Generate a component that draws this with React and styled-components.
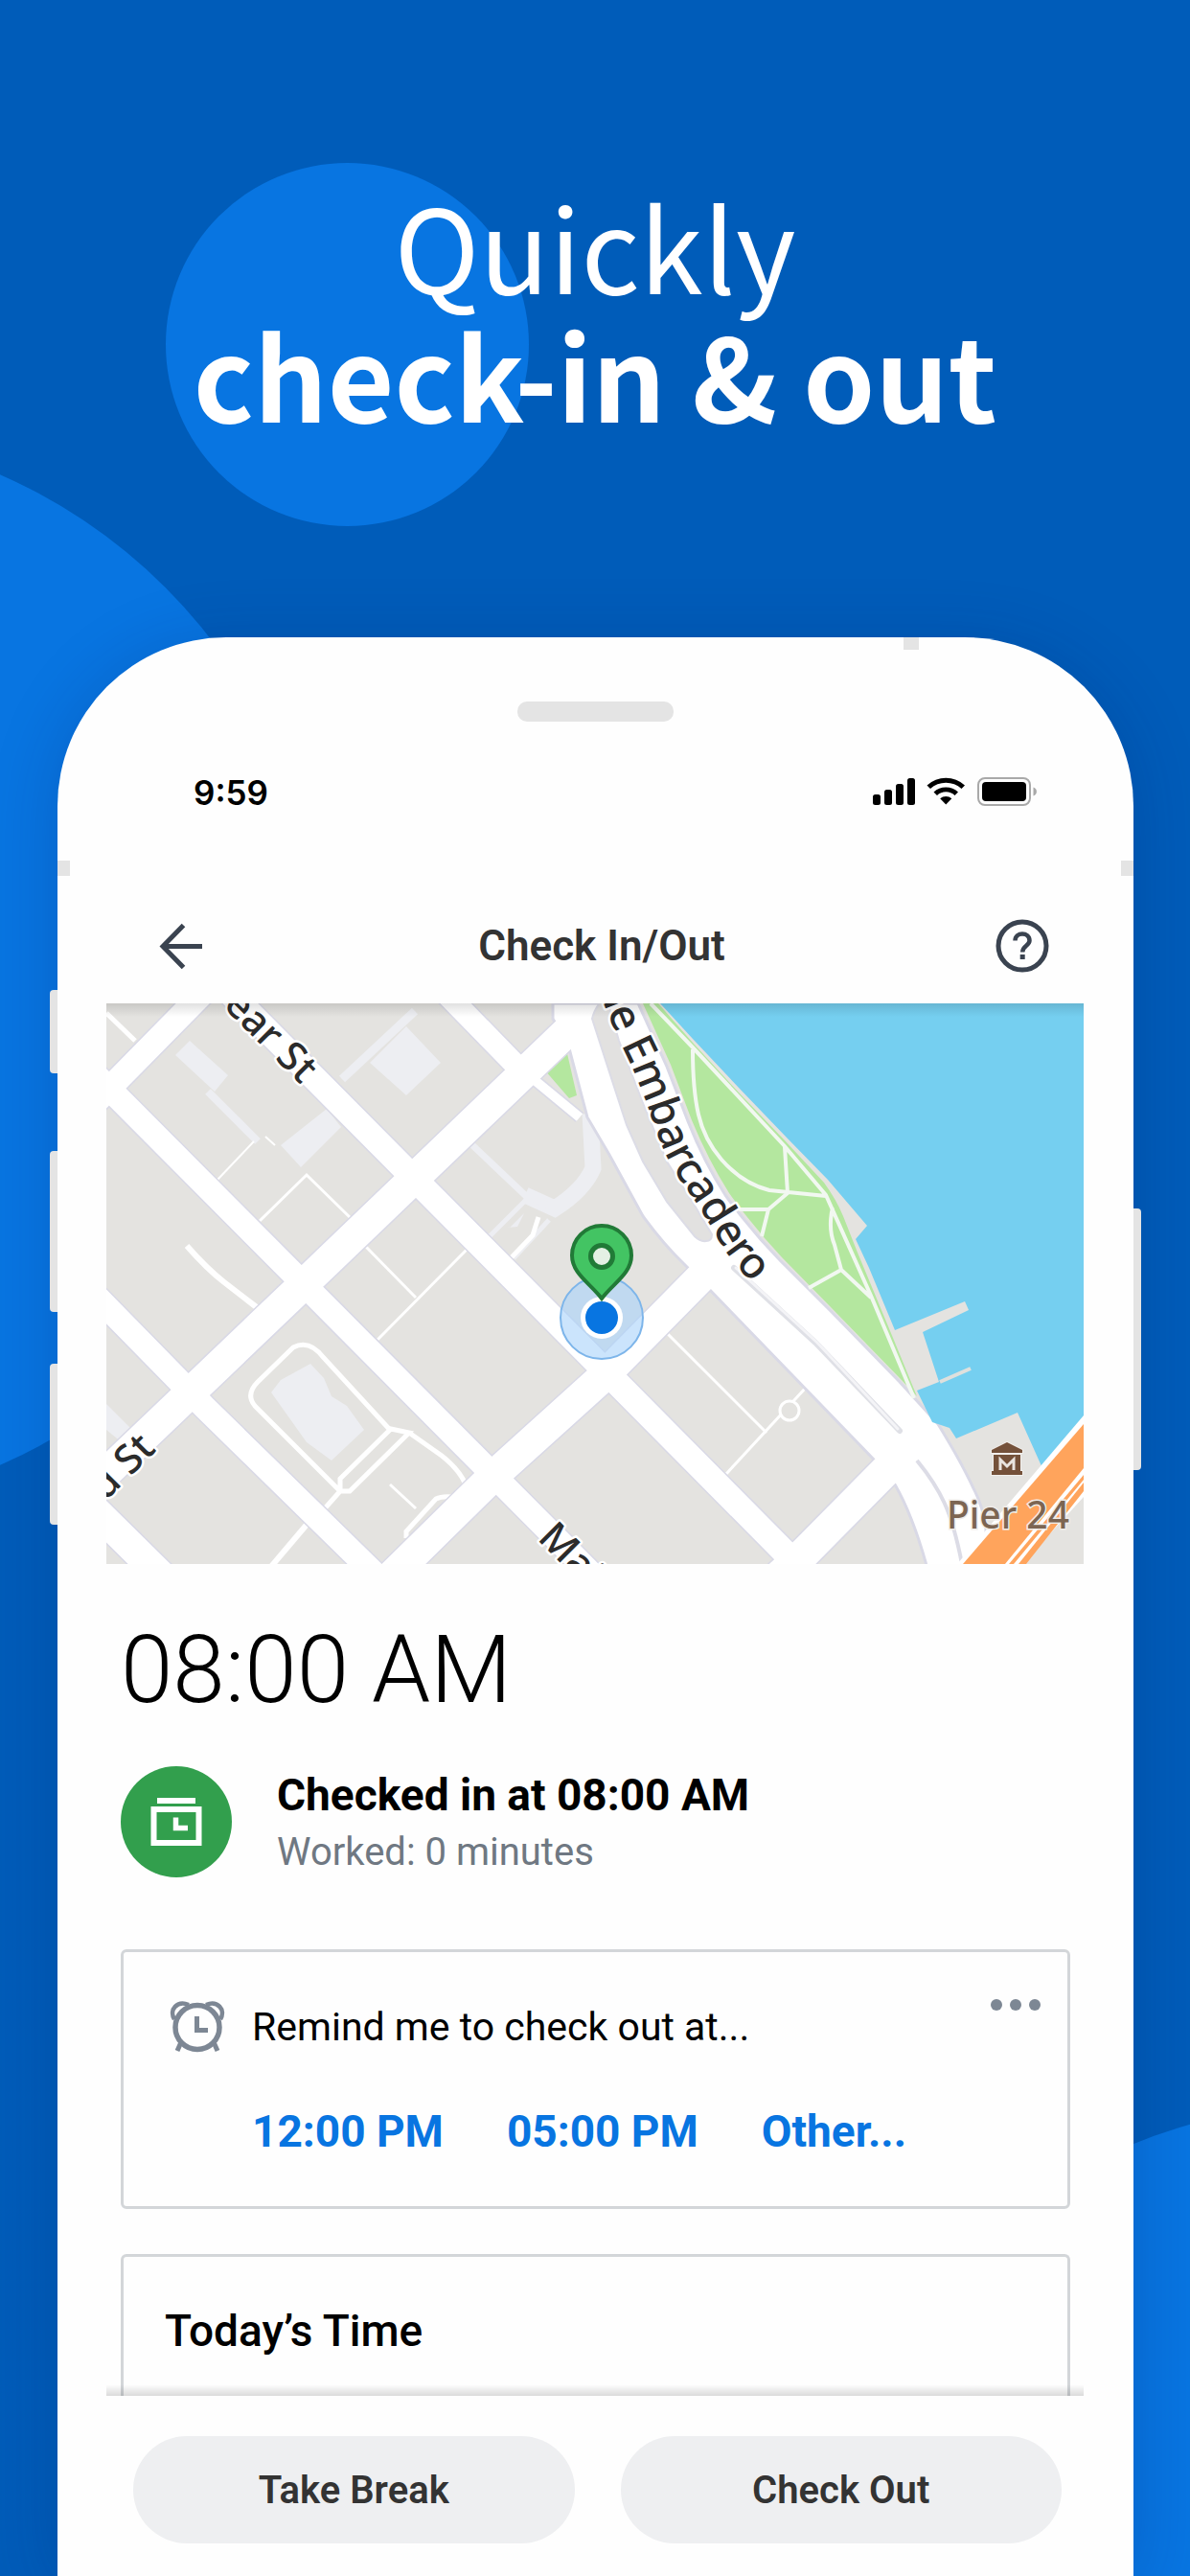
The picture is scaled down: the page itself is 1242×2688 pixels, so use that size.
import React from "react";
import styled, { createGlobalStyle } from "styled-components";

const color = {
  base: "#005cb9",
  bright: "#0875e1",
  frame: "#fefefe",
  hardware: "#e4e4e4",
  ink: "#000000",
  heading: "#333333",
  muted: "#6f7882",
  border: "#d3d6d9",
  success: "#329f4d",
  pill: "#eeeff1",
};

const Global = createGlobalStyle`
  *, *::before, *::after { box-sizing: border-box; }
  body { margin: 0; background: ${color.base}; font-family: Roboto, "Liberation Sans", sans-serif; }
  h1, h2, p { margin: 0; }
  button { border: 0; padding: 0; background: none; font-family: inherit; cursor: pointer; }
  svg { display: block; }
`;

const Poster = styled.main`
  position: relative;
  overflow: hidden;
  background: ${color.base};
`;

const Disc = styled.span`
  position: absolute;
  left: ${(p) => p.$x}px;
  top: ${(p) => p.$y}px;
  width: ${(p) => p.$size}px;
  height: ${(p) => p.$size}px;
  border-radius: 50%;
  background: ${color.bright};
`;

const Hero = styled.h1`
  position: relative;
  height: 665px;
  padding-top: 188px;
  text-align: center;
  color: #fff;
  font-family: "Noto Sans CJK JP", "Noto Sans", sans-serif;
  font-size: 120px;
  font-weight: 400;
  line-height: 134px;
`;

const HeroStrong = styled.strong`
  display: block;
  font-weight: 700;
`;

const Phone = styled.section`
  position: relative;
  margin: 0 59px 0 60px;
  padding: 67px 52px 0 51px;
  border-radius: 176px 176px 0 0;
  background: ${color.frame};
  box-shadow: 0 10px 70px rgba(0, 30, 100, 0.22);
`;

const SideKey = styled.span`
  position: absolute;
  top: ${(p) => p.$top}px;
  ${(p) => p.$side}: -8px;
  width: 8px;
  height: ${(p) => p.$height}px;
  border-radius: ${(p) => (p.$side === "left" ? "4px 0 0 4px" : "0 4px 4px 0")};
  background: ${color.hardware};
`;

const AntennaTop = styled.span`
  position: absolute;
  top: 0;
  right: 224px;
  width: 16px;
  height: 13px;
  background: ${color.hardware};
`;

const AntennaSide = styled.span`
  position: absolute;
  top: 233px;
  ${(p) => p.$side}: 0;
  width: 13px;
  height: 16px;
  background: ${color.hardware};
`;

const Speaker = styled.div`
  width: 163px;
  height: 21px;
  margin: 0 auto;
  border-radius: 10px;
  background: ${color.hardware};
`;

const StatusBar = styled.div`
  display: flex;
  align-items: center;
  justify-content: space-between;
  height: 44px;
  margin-top: 52px;
  padding: 0 48px 0 91px;
`;

const Clock = styled.time`
  font-family: Inter, sans-serif;
  font-size: 35px;
  font-weight: 600;
  line-height: 44px;
  color: ${color.ink};
`;

const TitleBar = styled.header`
  display: grid;
  grid-template-columns: 60px 1fr 60px;
  align-items: center;
  height: 120px;
  margin-top: 78px;
  padding: 0 34px 0 48px;
`;

const IconButton = styled.button`
  display: flex;
  align-items: center;
  justify-content: center;
  width: 60px;
  height: 60px;
`;

const Title = styled.h2`
  text-align: center;
  font-size: 44px;
  font-weight: 600;
  line-height: 58px;
  color: ${color.heading};
`;

const MapView = styled.svg`
  width: 100%;
  height: auto;
  background: #e4e3e0;
`;

const Content = styled.div`
  padding: 51px 14px 0 15px;
`;

const BigTime = styled.p`
  font-size: 98px;
  font-weight: 300;
  line-height: 120px;
  color: ${color.ink};
`;

const Status = styled.div`
  display: flex;
  gap: 47px;
  margin: 40px 0 71px;
`;

const Badge = styled.span`
  display: flex;
  flex: none;
  align-items: center;
  justify-content: center;
  width: 116px;
  height: 116px;
  border-radius: 50%;
  background: ${color.success};
`;

const StatusTitle = styled.h2`
  font-size: 46px;
  font-weight: 700;
  line-height: 60px;
  color: ${color.ink};
`;

const StatusNote = styled.p`
  font-size: 40px;
  line-height: 60px;
  color: ${color.muted};
`;

const Card = styled.section`
  padding: ${(p) => p.$pad};
  border: 3px solid ${color.border};
  border-bottom-width: ${(p) => (p.$open ? 0 : 3)}px;
  border-radius: ${(p) => (p.$open ? "6px 6px 0 0" : "6px")};
`;

const CardHead = styled.div`
  display: grid;
  grid-template-columns: 58px 1fr auto;
  column-gap: 28px;
  align-items: center;
  height: 58px;
`;

const Prompt = styled.p`
  font-size: 41px;
  line-height: 58px;
  color: ${color.ink};
`;

const MoreButton = styled.button`
  align-self: start;
  height: 12px;
`;

const Times = styled.div`
  display: flex;
  gap: 66px;
  margin-top: 50px;
  padding-left: 86px;
`;

const TimeOption = styled.button`
  font-size: 46px;
  font-weight: 700;
  line-height: 60px;
  color: ${color.bright};
`;

const SecondCard = styled.div`
  margin-top: 47px;
`;

const CardTitle = styled.h2`
  font-size: 46px;
  font-weight: 500;
  line-height: 60px;
  color: ${color.ink};
`;

const Actions = styled.footer`
  display: flex;
  gap: 48px;
  padding: 42px 23px 34px 28px;
  position: relative;
  background: ${color.frame};

  &::before {
    content: "";
    position: absolute;
    left: 0;
    right: 0;
    bottom: 100%;
    height: 12px;
    background: linear-gradient(rgba(0, 0, 0, 0), rgba(0, 0, 0, 0.14));
  }
`;

const Pill = styled.button`
  flex: 1;
  height: 112px;
  border-radius: 56px;
  background: ${color.pill};
  font-size: 40px;
  font-weight: 600;
  color: ${color.heading};
`;

function StatusIcons() {
  return (
    <svg width="173" height="32" viewBox="0 0 173 32" aria-hidden="true">
      <rect x="1" y="18" width="8" height="11" rx="2.5" />
      <rect x="13" y="13" width="8" height="16" rx="2.5" />
      <rect x="25" y="7" width="8" height="22" rx="2.5" />
      <rect x="37" y="1" width="8" height="28" rx="2.5" />
      <path d="M57.5 8.5 61 12a24 24 0 0 1 32.500 0L97 8.500a29 29 0 0 0-39.500 0Z" />
      <path d="M64.500 15.500 68 19a13.500 13.500 0 0 1 18.500 0L90 15.500a18.500 18.500 0 0 0-25.500 0Z" />
      <path d="M71.200 22.300 77.250 28.500 83.300 22.300a9 9 0 0 0-12.100 0Z" />
      <rect x="111" y="1" width="54" height="28" rx="7" fill="none" stroke="#a9a9a9" strokeWidth="2" />
      <rect x="115" y="5" width="46" height="20" rx="4" />
      <path d="M168.500 10.500c4.500 1.500 4.500 7.500 0 9Z" fill="#a9a9a9" />
    </svg>
  );
}

function BackIcon() {
  return (
    <svg width="46" height="48" viewBox="0 0 46 48" fill="none" stroke="#3a4350" strokeWidth="5" aria-hidden="true">
      <path d="M45 24.500H5M25.500 2.500 4 24.500l21.500 22" />
    </svg>
  );
}

function HelpIcon() {
  return (
    <svg width="56" height="56" viewBox="0 0 56 56" fill="none" stroke="#3a4350" aria-hidden="true">
      <circle cx="28" cy="28" r="25" strokeWidth="5" />
      <path d="M20.500 22.500c0-9.500 15-9.500 15 0 0 5.500-7.300 5-7.300 12" strokeWidth="4.500" />
      <rect x="25.700" y="37" width="5" height="5" fill="#3a4350" stroke="none" />
    </svg>
  );
}

function BadgeIcon() {
  return (
    <svg width="54" height="50" viewBox="0 0 54 50" aria-hidden="true">
      <path d="M7 0h40v6H7Z" fill="#fff" />
      <rect x="3.500" y="12" width="47" height="35" fill="none" stroke="#fff" strokeWidth="6" />
      <path d="M26.500 20.500v11H39" fill="none" stroke="#fff" strokeWidth="5.500" />
    </svg>
  );
}

function AlarmIcon() {
  return (
    <svg width="58" height="54" viewBox="0 0 58 54" fill="none" stroke="#7d8794" aria-hidden="true">
      <circle cx="29" cy="27.500" r="23" strokeWidth="5.500" />
      <path d="M5 19C-1 9 8-1 20 4M53 19C59 9 50-1 38 4" strokeWidth="4.500" />
      <path d="m12 43-4 9M46 43l4 9" strokeWidth="5" />
      <path d="M28.500 16v14.500H40" strokeWidth="5" />
    </svg>
  );
}

function DotsIcon() {
  return (
    <svg width="54" height="12" viewBox="0 0 54 12" fill="#7d8794" aria-hidden="true">
      <circle cx="7" cy="6" r="6" />
      <circle cx="27" cy="6" r="6" />
      <circle cx="47" cy="6" r="6" />
    </svg>
  );
}

const streets = [
  { d: "M-20 112 110-20", w: 25 },
  { d: "M-20 509 206 293 497 14", w: 32 },
  { d: "M290 605 405 492 517 391 640 266", w: 32 },
  { d: "M700 600 729 573 812 489 850 452", w: 33 },
  { d: "M120-20 530 393 740 605", w: 26 },
  { d: "M-20 66 206 293 520 609", w: 25 },
  { d: "M-20 296 80 398 102 421 290 605", w: 25 },
  { d: "M-20 521 65 605", w: 31 },
  { d: "M345-20 425 62", w: 23 },
  { d: "M425 62 494 119", w: 10 },
];

const lanes = [
  { d: "M0 10 30 39", w: 5 },
  { d: "M154 144 116 184", w: 2 },
  { d: "M166 139 176 148", w: 2 },
  { d: "M160 227 209 179 256 225", w: 3 },
  { d: "M270 253 323 307", w: 3 },
  { d: "M376 257 283 351", w: 3 },
  { d: "M84 253Q105 277 123 291L158 318", w: 6 },
  { d: "M296 445 227 370Q212 350 195 359L158 395Q145 408 155 420L244 509H254L316 448 297 444 244 496V509L228 527", w: 5 },
  { d: "M316 448 350 472Q368 486 375 502", w: 5 },
  { d: "M209 544 170 590", w: 6 },
  { d: "M296 502 323 527", w: 3 },
  { d: "M313 558V551L344 517Q350 514 361 515", w: 5 },
  { d: "M451 223 445 242 421 267", w: 5 },
  { d: "M582 341 689 448", w: 3 },
  { d: "M730 401 646 492", w: 3 },
];

const trails =
  "M568 0 612 46 707 148 751 200 798 305 843 412M612 48Q612 90 618 116T642 163Q664 188 692 195L751 201M708 150 711 198 691 215 684 243M691 215H660M758 213Q753 235 760 252L767 278 798 307M767 278 733 297";

function CityMap() {
  return (
    <MapView viewBox="0 0 1020 585" role="img" aria-label="Map around Pier 24">
      <defs>
        <linearGradient id="mapShade" x1="0" y1="0" x2="0" y2="1">
          <stop offset="0" stopColor="#000" stopOpacity="0.12" />
          <stop offset="1" stopColor="#000" stopOpacity="0" />
        </linearGradient>
        <path id="waterfront" d="M512-18Q528 24 543 55T571 125 601 187 641 250 740 352" />
      </defs>
      <rect width="1020" height="585" fill="#e4e3e0" />

      <g fill="#edeef2">
        <path d="M87 39 127 75 113 92 72 54Z" />
        <path d="M230 110 245 129 203 171 182 148Z" />
        <path d="M313 24 349 62 313 96 275 62Z" />
        <path d="M213 376 227 391 235 410 251 420 269 445 235 477 209 458 172 406 182 393Z" />
        <path d="M0 418 27 445 16 458 0 445Z" />
        <path d="M421 234 436 219 429 233 418 234Z" />
      </g>
      <g fill="none" stroke="#edeef2">
        <path d="M106 92 158 144" strokeWidth="8" />
        <path d="M322 8 246 79" strokeWidth="9" />
        <path d="M505 115 508 172Q498 195 468 214L437 200" strokeWidth="17" />
        <path d="M468 214 437 200 380 146" strokeWidth="7" />
        <path d="M440 203 400 243M462 226 425 266" strokeWidth="5" />
      </g>

      <path d="M480 48 457 69 483 99 491 96Z" fill="#b4e79f" />

      <g fill="none" stroke="#fff">
        {lanes.map((s) => (
          <path key={s.d} d={s.d} strokeWidth={s.w} />
        ))}
        <circle cx="713" cy="425" r="10" strokeWidth="3" fill="#e4e3e0" />
      </g>
      <g fill="none" stroke="#d9d9e6">
        {streets.map((s) => (
          <path key={s.d} d={s.d} strokeWidth={s.w + 3} />
        ))}
      </g>
      <path
        d="M466 0V16L482 43 502 119 525 158 560 222Q582 252 603 272L626 295 802 477 823 502Q842 535 857 590H918V548Q915 525 905 506 892 478 868 439L828 395 757 322 703 268Q672 236 646 200 624 166 607 123L585 66 555 0Z"
        fill="#fff"
        stroke="#d9d9e6"
        strokeWidth="3"
      />
      <g fill="none" stroke="#fff">
        {streets.map((s) => (
          <path key={s.d} d={s.d} strokeWidth={s.w} />
        ))}
      </g>
      <path
        d="M507 16Q509 7 516-2H523L535 39 560 104 585 165 614 211 632 241Q632 248 626 248 620 249 614 243L585 207 560 165 543 127 528 81Z"
        fill="#e2e1e0"
        stroke="#dcdce6"
        strokeWidth="2"
      />
      <path d="M655 276 740 354 828 446" fill="none" stroke="#dfe0e6" strokeWidth="6" strokeLinecap="round" />
      <path d="M657 276 742 354 826 444" fill="none" stroke="#f4f4f7" strokeWidth="3" strokeLinecap="round" />
      <path d="M846 477Q865 500 875 522T893 585" fill="none" stroke="#dcdce6" strokeWidth="4" />

      <path
        d="M578 0 612 37 660 88 710 140 753 184 794 232 782 246 796 276 823 341 896 311 900 320 852 343 869 395 846 404 862 437 880 443 887 454 951 427 977 485 1020 433V0Z"
        fill="#75cff0"
      />
      <path d="M870 395 902 381" stroke="#dfe0dd" strokeWidth="4" />
      <path
        d="M560 0H576L612 41 660 93 708 143 749 187Q762 205 769 222L784 260 821 349 846 410 828 391 757 318 705 265Q676 234 650 198 628 163 611 122L589 64Z"
        fill="#b4e79f"
      />
      <path d={trails} fill="none" stroke="#f2f8f1" strokeWidth="4" strokeLinejoin="round" />

      <path d="M888 585 1020 430V515L956 585Z" fill="#fff" />
      <path d="M894 585 1020 439V485L938 585Z" fill="#ffa45c" />
      <path d="M942 585 1020 492V497L947 585Z" fill="#ffa45c" />
      <path d="M952 585 1020 500V509L960 585Z" fill="#ffa45c" />

      <g fill="#74513a" stroke="#f1efec" strokeWidth="2" paintOrder="stroke">
        <path d="M940 458 956 466V469H924V466Z" />
        <path d="M926 471H954V488H956V492H924V488H926Z" />
      </g>
      <path d="M933 487V476L940 483 947 476V487" fill="none" stroke="#e9e4df" strokeWidth="3" />
      <text
        x="877"
        y="548"
        fontFamily="Noto Sans, sans-serif"
        fontSize="39"
        fontWeight="500"
        fill="#7c6552"
        stroke="#efece8"
        strokeWidth="3"
        paintOrder="stroke"
      >
        Pier 24
      </text>

      <g
        fontFamily="Noto Sans, sans-serif"
        fontSize="42"
        fontWeight="500"
        fill="#2b2b2b"
        stroke="#fff"
        strokeWidth="5"
        strokeLinejoin="round"
        paintOrder="stroke"
      >
        <text transform="translate(121 3) rotate(45)">ear St</text>
        <text transform="translate(-1 520) rotate(-45)">d St</text>
        <text transform="translate(449 559) rotate(45)">Main</text>
        <text fontSize="45">
          <textPath href="#waterfront">he Embarcadero</textPath>
        </text>
      </g>

      <circle cx="517" cy="328" r="43" fill="#a9d2fa" fillOpacity="0.6" stroke="#7db5ea" strokeWidth="2" />
      <circle cx="517" cy="328" r="22" fill="#fff" />
      <circle cx="517" cy="328" r="17" fill="#0875e1" />
      <path
        d="M517 308C505 292 486 282 486 263a31 31 0 0 1 62 0C548 282 529 292 517 308Z"
        fill="#43c463"
        stroke="#217a37"
        strokeWidth="4"
      />
      <circle cx="517" cy="264" r="11.500" fill="#e4f0e4" stroke="#217a37" strokeWidth="5" />
      <rect width="1020" height="14" fill="url(#mapShade)" />
    </MapView>
  );
}

const reminderTimes = ["12:00 PM", "05:00 PM", "Other..."];

export default function App() {
  return (
    <Poster>
      <Global />
      <Disc $x={173} $y={170} $size={379} />
      <Disc $x={-790} $y={448} $size={1128} />
      <Disc $x={830} $y={2196} $size={1128} />
      <Hero>
        Quickly <HeroStrong>check-in &amp; out</HeroStrong>
      </Hero>
      <Phone>
        <SideKey $side="left" $top={368} $height={87} />
        <SideKey $side="left" $top={536} $height={168} />
        <SideKey $side="left" $top={758} $height={168} />
        <SideKey $side="right" $top={596} $height={273} />
        <AntennaTop />
        <AntennaSide $side="left" />
        <AntennaSide $side="right" />
        <Speaker />
        <StatusBar>
          <Clock>9:59</Clock>
          <StatusIcons />
        </StatusBar>
        <TitleBar>
          <IconButton aria-label="Back">
            <BackIcon />
          </IconButton>
          <Title>Check In/Out</Title>
          <IconButton aria-label="Help">
            <HelpIcon />
          </IconButton>
        </TitleBar>
        <CityMap />
        <Content>
          <BigTime>08:00 AM</BigTime>
          <Status>
            <Badge>
              <BadgeIcon />
            </Badge>
            <div>
              <StatusTitle>Checked in at 08:00 AM</StatusTitle>
              <StatusNote>Worked: 0 minutes</StatusNote>
            </div>
          </Status>
          <Card $pad="49px 27px 48px 48px">
            <CardHead>
              <AlarmIcon />
              <Prompt>Remind me to check out at...</Prompt>
              <MoreButton aria-label="More options">
                <DotsIcon />
              </MoreButton>
            </CardHead>
            <Times>
              {reminderTimes.map((t) => (
                <TimeOption key={t}>{t}</TimeOption>
              ))}
            </Times>
          </Card>
          <SecondCard>
            <Card $open $pad="47px 43px 38px">
              <CardTitle>Today’s Time</CardTitle>
            </Card>
          </SecondCard>
        </Content>
        <Actions>
          <Pill>Take Break</Pill>
          <Pill>Check Out</Pill>
        </Actions>
      </Phone>
    </Poster>
  );
}
